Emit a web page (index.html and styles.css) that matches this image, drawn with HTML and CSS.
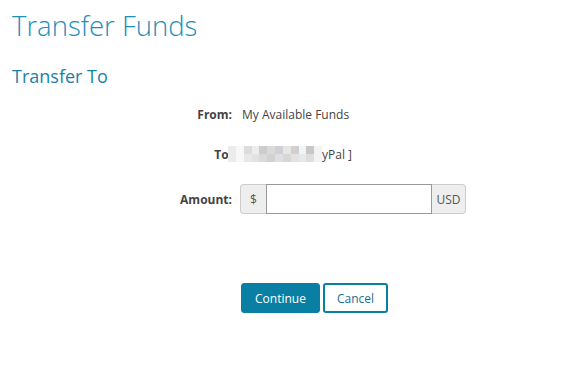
FILE: index.html
```html
<!DOCTYPE html>
<html lang="en">
<head>
  <meta charset="UTF-8">
  <meta name="viewport" content="width=device-width, initial-scale=1.0">
  <title>Transfer Funds</title>
  <link rel="stylesheet" href="styles.css">
</head>
<body>
  <h1 class="page-title">Transfer Funds</h1>
  <h2 class="section-title">Transfer To</h2>

  <form class="transfer-form">
    <div class="form-row">
      <label class="form-label">From:</label>
      <div class="form-value">My Available Funds</div>
    </div>
    <div class="form-row">
      <label class="form-label">To:</label>
      <div class="form-value to-value"><span class="redacted"><i></i><i></i><i></i><i></i><i></i><i></i><i></i><i></i><i></i><i></i><i></i><i></i><i></i><i></i><i></i><i></i><i></i><i></i><i></i><i></i><i></i><i></i><i></i><i></i></span>yPal ]</div>
    </div>
    <div class="form-row amount-row">
      <label class="form-label" for="amount">Amount:</label>
      <div class="input-group">
        <span class="addon addon-left">$</span>
        <input id="amount" class="amount-input" type="text">
        <span class="addon addon-right">USD</span>
      </div>
    </div>
    <div class="form-actions">
      <button type="button" class="btn btn-primary">Continue</button>
      <button type="button" class="btn btn-outline">Cancel</button>
    </div>
  </form>
</body>
</html>
```

FILE: styles.css
```css
body {
  margin: 0;
  padding: 0 12px;
  font-family: "Open Sans", "Segoe UI", Arial, sans-serif;
  font-size: 12px;
  color: #444;
  background: #fff;
}
.page-title {
  margin: 7px 0 0;
  font-size: 27.5px;
  font-weight: 300;
  color: #1b8fb9;
  line-height: 38px;
}
.section-title {
  margin: 19px 0 0;
  font-size: 18px;
  font-weight: 400;
  color: #1b7fa6;
  line-height: 24px;
}
.transfer-form {
  margin-top: 6px;
}
.form-row {
  display: grid;
  grid-template-columns: 220px auto;
  column-gap: 10px;
  align-items: center;
  height: 40px;
}
.form-label {
  text-align: right;
  font-weight: 700;
  color: #444;
}
.form-value {
  color: #444;
}
.to-value {
  display: flex;
  align-items: center;
  white-space: nowrap;
}
.redacted {
  display: grid;
  grid-template-columns: repeat(12, 1fr);
  grid-template-rows: repeat(2, 1fr);
  width: 94px;
  height: 16px;
  margin-left: -14px;
  background: #fff;
}
.redacted i:nth-child(1), .redacted i:nth-child(13) { background: #ececec; }
.redacted i:nth-child(2), .redacted i:nth-child(14) { background: #f8f8f8; }
.redacted i:nth-child(3) { background: #dcdcdc; }
.redacted i:nth-child(15) { background: #e8e8e8; }
.redacted i:nth-child(4) { background: #eeeeee; }
.redacted i:nth-child(16) { background: #e2e2e2; }
.redacted i:nth-child(5) { background: #cccccc; }
.redacted i:nth-child(17) { background: #dadada; }
.redacted i:nth-child(6) { background: #dadada; }
.redacted i:nth-child(18) { background: #d2d2d2; }
.redacted i:nth-child(7) { background: #cfcfd4; }
.redacted i:nth-child(19) { background: #dde0e0; }
.redacted i:nth-child(8) { background: #e6e6e6; }
.redacted i:nth-child(20) { background: #d6d6d6; }
.redacted i:nth-child(9) { background: #d2cfcf; }
.redacted i:nth-child(21) { background: #e2e2e2; }
.redacted i:nth-child(10) { background: #f2f5f8; }
.redacted i:nth-child(22) { background: #e6e9e9; }
.redacted i:nth-child(11) { background: #c8c8c8; }
.redacted i:nth-child(23) { background: #dedede; }
.redacted i:nth-child(12), .redacted i:nth-child(24) { background: #f3f3f3; }
.amount-row {
  height: 50px;
}
.input-group {
  display: flex;
  width: 226px;
  height: 30px;
  margin-left: -2px;
}
.addon {
  display: flex;
  align-items: center;
  justify-content: center;
  background: #eee;
  border: 1px solid #ccc;
  color: #555;
}
.addon-left {
  width: 25px;
  border-right: none;
  border-radius: 4px 0 0 4px;
}
.addon-right {
  width: 33px;
  border-left: none;
  border-radius: 0 4px 4px 0;
}
.amount-input {
  flex: 1;
  min-width: 0;
  margin: 0;
  padding: 0 6px;
  border: 1px solid #999;
  font: inherit;
  outline: none;
}
.form-actions {
  display: flex;
  gap: 3px;
  margin: 59px 0 0 229px;
}
.btn {
  height: 30px;
  padding: 0 13px;
  font-family: inherit;
  font-size: 12px;
  border-radius: 3px;
  cursor: pointer;
}
.btn-primary {
  background: #097fa3;
  border: 1px solid #097fa3;
  color: #fff;
}
.btn-outline {
  background: #fff;
  border: 2px solid #097fa3;
  color: #1b6e8c;
  padding: 0 12px;
}
```
